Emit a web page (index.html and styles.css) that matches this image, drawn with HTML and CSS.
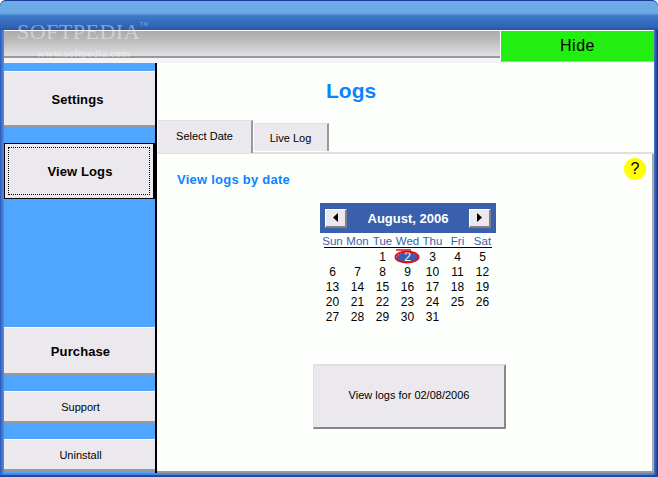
FILE: index.html
```html
<!DOCTYPE html>
<html lang="en">
<head>
    <meta charset="UTF-8">
    <meta name="viewport" content="width=device-width, initial-scale=1.0">
    <title>Logs</title>
    <link rel="stylesheet" href="styles.css">
</head>
<body>
    <div class="window">
        <div class="titlebar"></div>
        <div class="toolbar">
            <div class="toolbar-fill"></div>
            <button class="hide-btn">Hide</button>
        </div>
        <div class="main">
            <div class="sidebar">
                <button class="side-btn big settings">Settings</button>
                <button class="side-btn big active"><span>View Logs</span></button>
                <div class="side-space"></div>
                <button class="side-btn medium">Purchase</button>
                <button class="side-btn small">Support</button>
                <button class="side-btn small">Uninstall</button>
            </div>
            <div class="content">
                <h1>Logs</h1>
                <div class="tabs">
                    <div class="tab selected">Select Date</div>
                    <div class="tab">Live Log</div>
                </div>
                <div class="panel">
                    <div class="help">?</div>
                    <h2>View logs by date</h2>
                    <div class="calendar">
                        <div class="cal-head">
                            <button class="cal-nav"><svg width="6" height="9" viewBox="0 0 6 9"><path d="M5 0v9L0 4.5z" fill="#000"/></svg></button>
                            <span>August, 2006</span>
                            <button class="cal-nav"><svg width="6" height="9" viewBox="0 0 6 9"><path d="M1 0v9l5-4.500z" fill="#000"/></svg></button>
                        </div>
                        <div class="cal-grid dow">
                            <div>Sun</div><div>Mon</div><div>Tue</div><div>Wed</div><div>Thu</div><div>Fri</div><div>Sat</div>
                        </div>
                        <div class="cal-grid days">
                            <div></div><div></div><div>1</div>
                            <div class="today">2<svg class="ring" width="26" height="15" viewBox="0 0 26 15"><ellipse cx="13" cy="8" rx="11.500" ry="5.500" fill="none" stroke="#e01020" stroke-width="2"/><path d="M2 1h15" stroke="#e01020" stroke-width="1.500"/></svg></div>
                            <div>3</div><div>4</div><div>5</div>
                            <div>6</div><div>7</div><div>8</div><div>9</div><div>10</div><div>11</div><div>12</div>
                            <div>13</div><div>14</div><div>15</div><div>16</div><div>17</div><div>18</div><div>19</div>
                            <div>20</div><div>21</div><div>22</div><div>23</div><div>24</div><div>25</div><div>26</div>
                            <div>27</div><div>28</div><div>29</div><div>30</div><div>31</div>
                        </div>
                    </div>
                    <button class="view-btn">View logs for 02/08/2006</button>
                </div>
            </div>
        </div>
        <div class="watermark">SOFTPEDIA<sup>TM</sup></div>
        <div class="watermark-url">www.softpedia.com</div>
    </div>
</body>
</html>
```

FILE: styles.css
```css
* {
    box-sizing: border-box;
}
html, body {
    margin: 0;
    height: 100%;
    overflow: hidden;
}
body {
    font-family: "Liberation Sans", Arial, sans-serif;
    font-size: 11px;
    color: #000;
}
button {
    font-family: inherit;
    color: inherit;
    padding: 0;
    cursor: pointer;
}
.window {
    position: relative;
    width: 658px;
    height: 477px;
    padding: 0 4px 4px;
    display: flex;
    flex-direction: column;
    background: linear-gradient(90deg, #2a58b8 0, #4f86d8 3px, #4f86d8 653px, #16308c 658px);
    border-radius: 6px 6px 0 0;
    box-shadow: inset 0 -2px 0 #1f4aa8;
}
.titlebar {
    height: 30px;
    margin: 0 -4px;
    border-radius: 6px 6px 0 0;
    border-top: 1px solid #1c3a94;
    background: linear-gradient(180deg, #6cace8 0, #6caae6 12px, #3e78c8 15px, #2f62b4 26px, #264c9e 30px);
}
.toolbar {
    height: 33px;
    display: flex;
    background: #f4f4f6;
}
.toolbar-fill {
    flex: 1;
    height: 28px;
    border-top: 1px solid #fff;
    border-bottom: 2px solid #999;
    background: linear-gradient(180deg, #aaa 0, #bcbcbc 10px, #e4e4e8 26px);
}
.hide-btn {
    width: 154px;
    height: 32px;
    border: 0;
    border-top: 1px solid #fff;
    border-left: 1px solid #fff;
    border-bottom: 1px solid #bbb;
    background: #22ee11;
    font-size: 16px;
    letter-spacing: 0.5px;
}
.main {
    flex: 1;
    display: flex;
    min-height: 0;
}
.sidebar {
    width: 153px;
    padding: 8px 0 2px;
    display: flex;
    flex-direction: column;
    gap: 16px;
    background: #4fa5ff;
    border-right: 2px solid #000;
}
.side-btn {
    flex: none;
    width: 151px;
    padding-left: 2px;
    border: 0;
    border-top: 1px solid #fff;
    border-bottom: 2px solid #999;
    background: #ebe9ed;
}
.big {
    height: 56px;
    padding-top: 1px;
    font-size: 13px;
    font-weight: bold;
    letter-spacing: 0.1px;
}
.medium {
    height: 48px;
    padding-top: 2px;
    font-size: 13px;
    font-weight: bold;
    letter-spacing: 0.1px;
}
.small {
    height: 32px;
    font-size: 11px;
}
.settings {
    padding-left: 0;
    padding-right: 4px;
}
.side-btn.active {
    padding: 3px;
    border: 1px solid #000;
    border-right-width: 2px;
}
.active span {
    display: flex;
    height: 100%;
    padding-left: 2px;
    align-items: center;
    justify-content: center;
    border: 1px dotted #000;
}
.side-space {
    flex: 1;
    margin-bottom: -16px;
    margin-top: -16px;
}
.content {
    flex: 1;
    display: flex;
    flex-direction: column;
    background: #fdfffd;
    min-width: 0;
}
h1 {
    margin: 0;
    height: 58px;
    padding-top: 15px;
    padding-left: 169px;
    font-size: 21px;
    line-height: 26px;
    color: #0a84ff;
}
.tabs {
    height: 33px;
    display: flex;
    align-items: flex-end;
    padding-left: 1px;
    gap: 1px;
    border-bottom: 2px solid #e0e0e0;
}
.tab {
    width: 75px;
    height: 28px;
    margin-bottom: 1px;
    padding-top: 1px;
    display: flex;
    align-items: center;
    justify-content: center;
    background: #ebe9ed;
    border-top: 1px solid #e0e0e0;
    border-right: 2px solid #999;
}
.tab.selected {
    width: 95px;
    height: 33px;
    margin-bottom: -1px;
    padding-top: 0;
    padding-bottom: 2px;
}
.panel {
    position: relative;
    flex: 1;
    display: flex;
    flex-direction: column;
    align-items: flex-start;
    padding: 18px 0 0 20px;
    border-right: 2px solid #aaa;
    border-bottom: 2px solid #999;
}
.help {
    position: absolute;
    top: 4px;
    right: 6px;
    width: 22px;
    height: 22px;
    border-radius: 50%;
    background: #ffff00;
    text-align: center;
    font-size: 16px;
    line-height: 22px;
}
h2 {
    margin: 0;
    font-size: 13px;
    line-height: 16px;
    letter-spacing: 0.25px;
    color: #0a84ff;
}
.calendar {
    width: 176px;
    margin: 15px 0 0 143px;
}
.cal-head {
    height: 30px;
    padding: 0 5px;
    display: flex;
    align-items: center;
    justify-content: space-between;
    background: #3a5fac;
    color: #fff;
    font-weight: bold;
    font-size: 13px;
}
.cal-nav {
    width: 22px;
    height: 19px;
    display: flex;
    align-items: center;
    justify-content: center;
    border: 0;
    border-top: 1px solid #fff;
    border-left: 1px solid #fff;
    border-right: 2px solid #808080;
    border-bottom: 2px solid #808080;
    background: #ebe9ed;
}
.cal-grid {
    display: grid;
    grid-template-columns: repeat(7, 25px);
    text-align: center;
}
.dow {
    height: 15px;
    font-size: 11.500px;
    line-height: 16px;
    color: #3a5fac;
    background: linear-gradient(#000, #000) 4px 100% / 168px 1px no-repeat;
}
.days {
    grid-auto-rows: 15px;
    font-size: 12px;
    line-height: 15px;
    margin-top: 2px;
}
.today {
    position: relative;
    color: #fff;
    background: radial-gradient(ellipse 11px 5px at center, #3a5fac 99%, transparent 100%);
}
.ring {
    position: absolute;
    left: -1px;
    top: -1px;
}
.view-btn {
    width: 193px;
    height: 65px;
    margin: 39px 0 0 136px;
    padding-bottom: 3px;
    border: 0;
    border-top: 2px solid #e0e0e0;
    border-left: 1px solid #e0e0e0;
    border-right: 2px solid #888;
    border-bottom: 2px solid #888;
    background: #ebe9ed;
    font-size: 11px;
}
.watermark {
    position: absolute;
    left: 17px;
    top: 19px;
    font-family: "Liberation Serif", serif;
    font-size: 22px;
    letter-spacing: 0.5px;
    color: rgba(255, 255, 255, 0.42);
}
.watermark sup {
    font-family: "Liberation Sans", sans-serif;
    font-size: 5px;
    vertical-align: 13px;
    line-height: 0;
}
.watermark-url {
    position: absolute;
    left: 37px;
    top: 47px;
    font-family: "Liberation Serif", serif;
    font-size: 11px;
    letter-spacing: 0.3px;
    color: rgba(255, 255, 255, 0.55);
}
```
